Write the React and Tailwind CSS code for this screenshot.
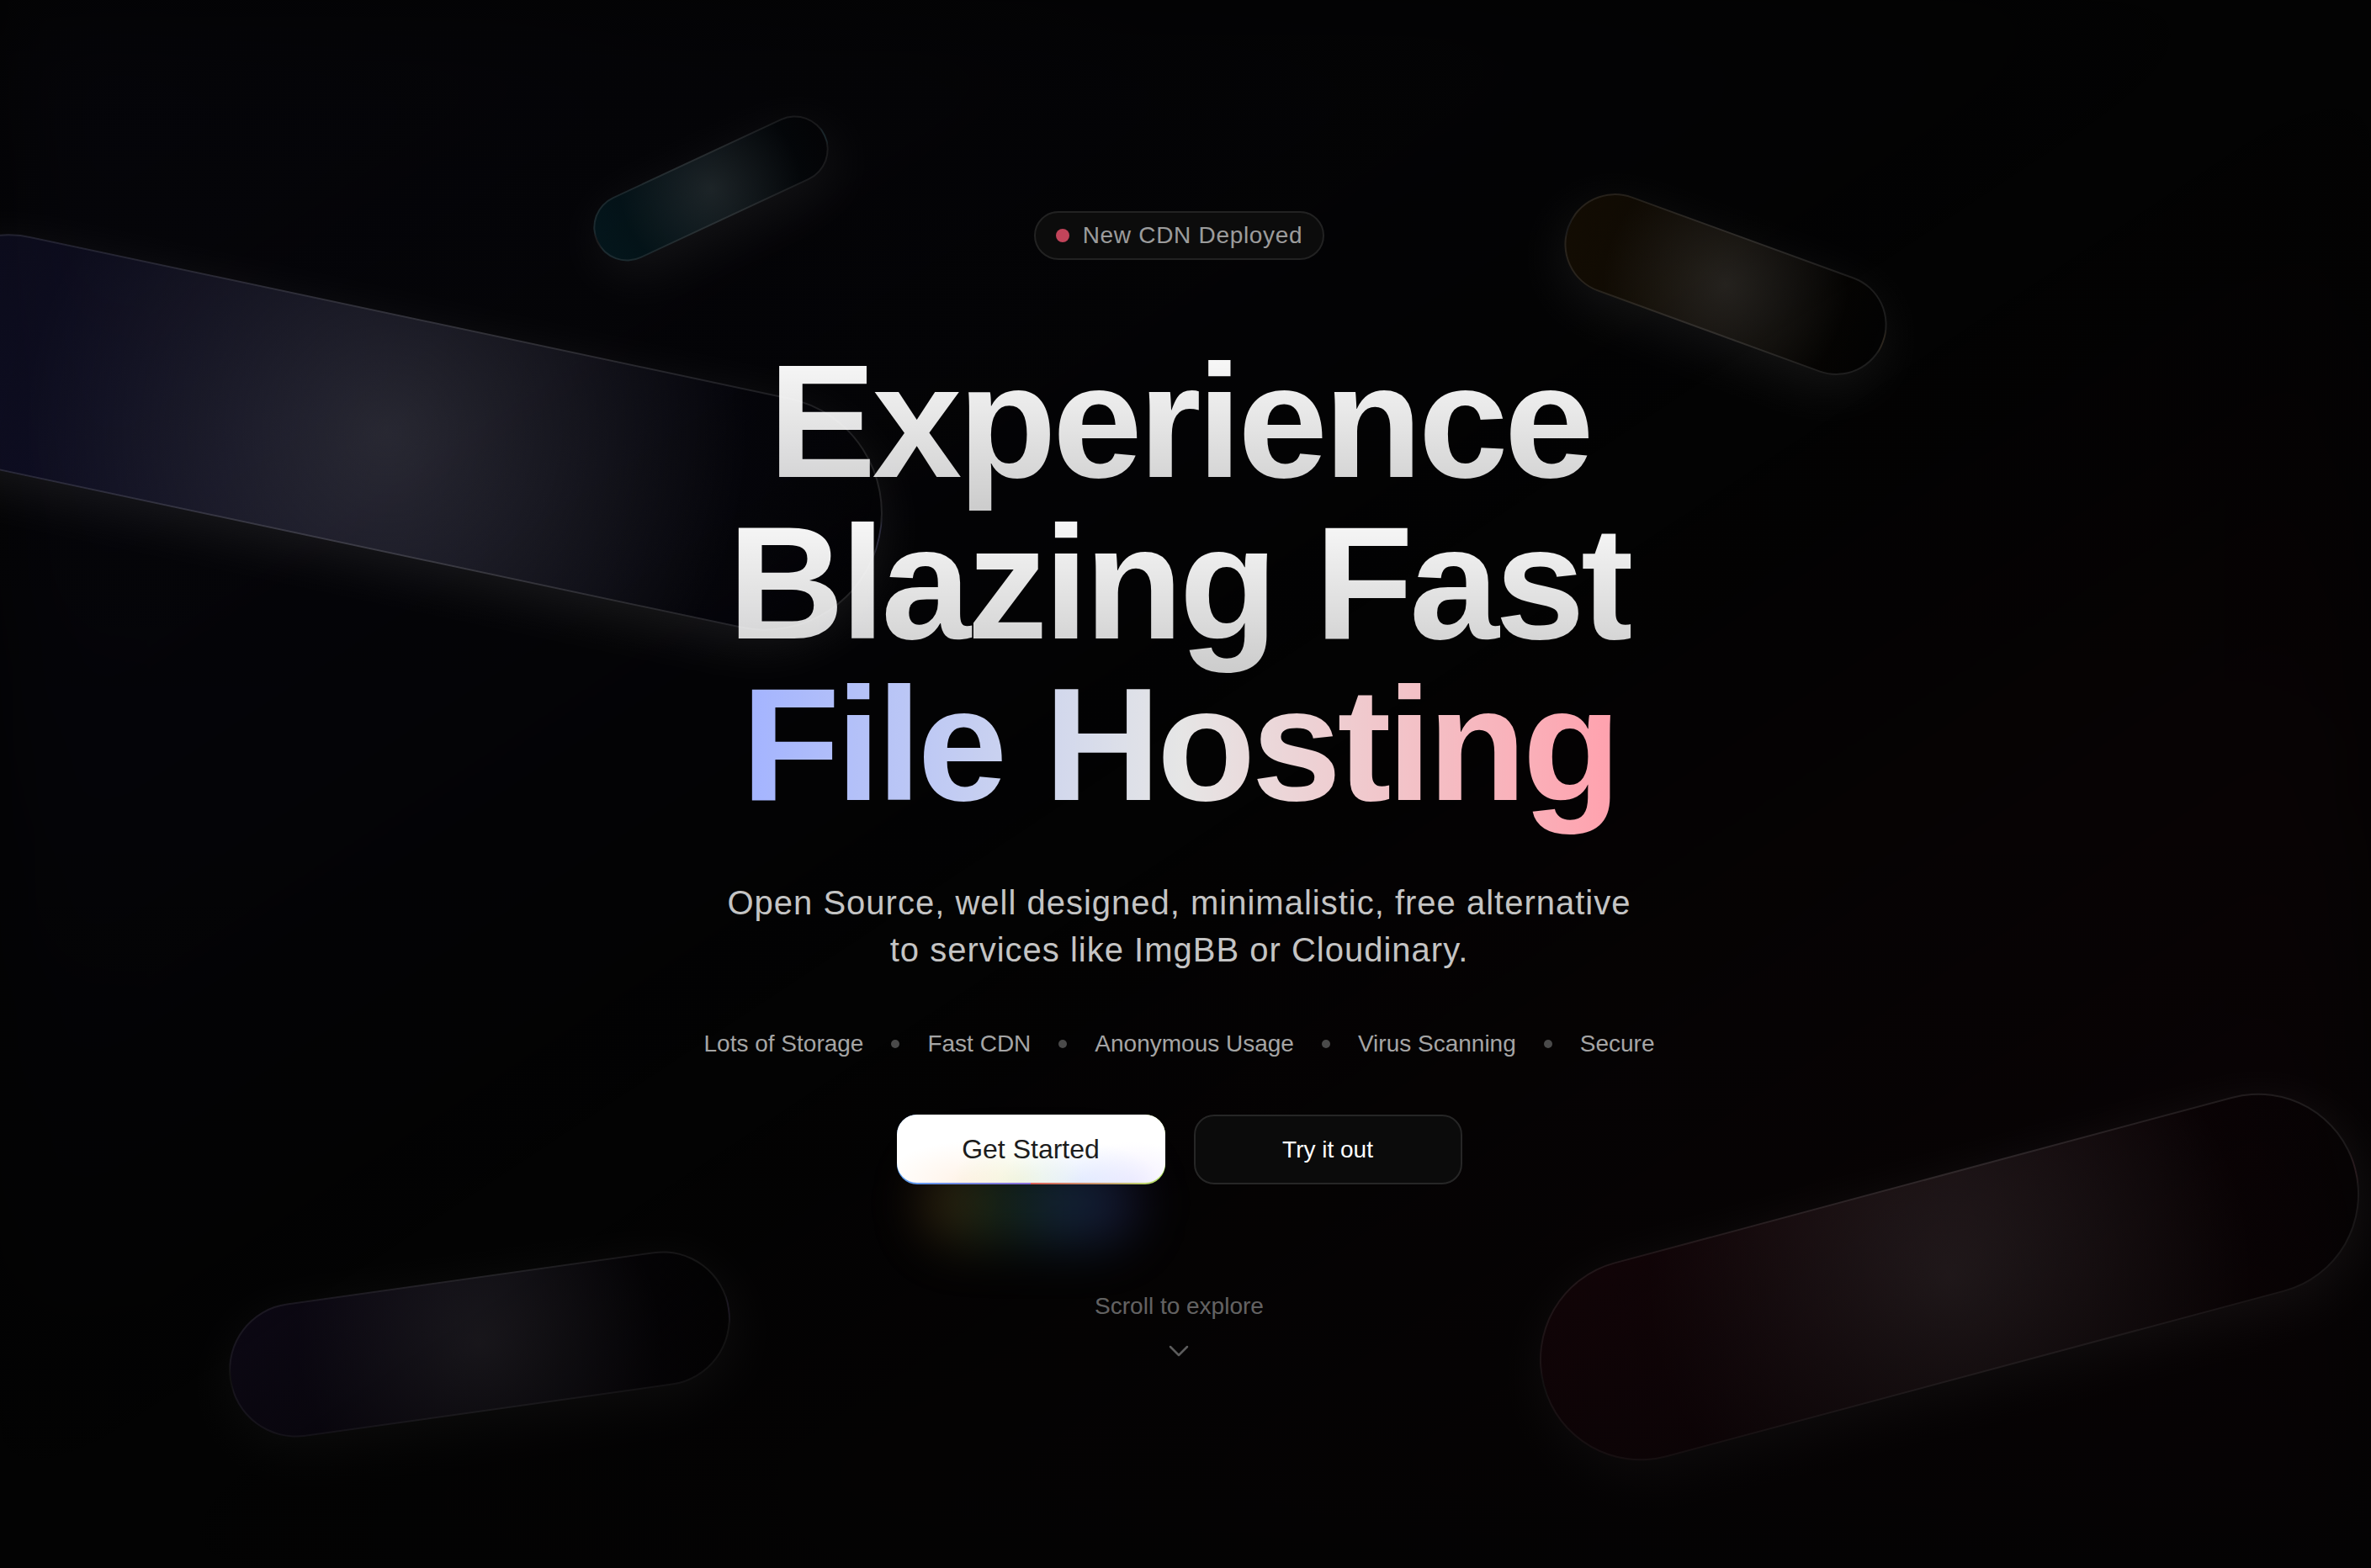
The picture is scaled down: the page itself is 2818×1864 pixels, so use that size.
import React from "react";
import { ChevronDown } from "lucide-react";

function Shape({ className, gradient }) {
    return (
        <div className={`absolute ${className}`}>
            <div className={`absolute inset-0 rounded-full bg-linear-to-r to-transparent ${gradient} border-2 border-white/15 shadow-[0_16px_64px_0_rgba(255,255,255,0.1)]`} />
            <div className="absolute inset-0 rounded-full bg-[radial-gradient(circle_at_50%_50%,rgba(255,255,255,0.16),transparent_70%)]" />
        </div>
    );
}

const features = ["Lots of Storage", "Fast CDN", "Anonymous Usage", "Virus Scanning", "Secure"];

export default function App() {
    return (
        <div className="relative w-full h-screen min-h-[1864px] overflow-hidden bg-[#030303] font-['Liberation_Sans',Arial,sans-serif]">
            {/* soft colour wash */}
            <div className="absolute inset-0 bg-linear-to-br from-indigo-500/5 via-transparent to-rose-500/5 blur-3xl" />

            {/* floating shapes */}
            <div className="absolute inset-0 overflow-hidden">
                <Shape className="left-[-141px] top-[374px] w-[1200px] h-[280px] rotate-[12deg]" gradient="from-indigo-500/15" />
                <Shape className="left-[1817px] top-[1398px] w-[1000px] h-[240px] rotate-[-15deg]" gradient="from-rose-500/10" />
                <Shape className="left-[270px] top-[1518px] w-[600px] h-[160px] rotate-[-8deg]" gradient="from-violet-500/15" />
                <Shape className="left-[1851px] top-[278px] w-[400px] h-[120px] rotate-[20deg]" gradient="from-amber-500/10" />
                <Shape className="left-[695px] top-[184px] w-[300px] h-[80px] rotate-[-25deg]" gradient="from-cyan-500/15" />
            </div>

            {/* vignette */}
            <div className="absolute inset-0 bg-linear-to-t from-[#030303]/80 via-transparent to-[#030303]/50 pointer-events-none" />

            {/* Hero content */}
            <div className="relative z-10 flex flex-col items-center pt-[251px] pr-[15px]">
                <div className="flex items-center gap-4 h-[58px] px-6 rounded-full bg-[#0c0c0c] border-2 border-[#222222]">
                    <span className="w-4 h-4 rounded-full bg-[#c2445a]" />
                    <span className="text-[28px] leading-[40px] tracking-wide text-white/60">New CDN Deployed</span>
                </div>

                <h1 className="mt-[96px] text-center text-[192px] leading-[192px] font-bold tracking-tight">
                    <span className="bg-clip-text text-transparent bg-linear-to-b from-white to-white/80">
                        Experience
                        <br />
                        Blazing Fast
                    </span>
                    <br />
                    <span className="bg-clip-text text-transparent bg-linear-to-r from-indigo-300 via-white/90 to-rose-300">
                        File Hosting
                    </span>
                </h1>

                <p className="mt-16 text-center text-[40px] leading-[56px] tracking-wide font-light text-[#c4c4c4]">
                    Open Source, well designed, minimalistic, free alternative
                    <br />
                    to services like ImgBB or Cloudinary.
                </p>

                <div className="mt-16 flex items-center gap-[33px] text-[28px] leading-[40px] text-[#a5a5a5]">
                    {features.map((f, i) => (
                        <React.Fragment key={f}>
                            {i > 0 && <span className="w-[10px] h-[10px] rounded-full bg-[#4a4a4a]" />}
                            <span>{f}</span>
                        </React.Fragment>
                    ))}
                </div>

                <div className="mt-16 flex items-start gap-[34px]">
                    <div className="relative">
                        <div className="absolute left-[30px] right-[30px] top-[55px] h-[100px] rounded-full bg-[linear-gradient(90deg,rgba(190,120,40,0.3),rgba(70,150,80,0.22)_35%,rgba(50,120,190,0.28)_65%,rgba(80,80,200,0.22))] blur-[30px]" />
                        <div className="relative rounded-[24px] pb-[2px] bg-[linear-gradient(90deg,#5ea2f2_0%,#8a6ed8_50%,#d86058_50%,#c9a070_78%,#b6ec68_100%)]">
                            <button className="relative w-[319px] h-[81px] rounded-[24px] bg-white overflow-hidden text-[32px] text-[#1c1c1c]">
                                <span className="absolute inset-0 bg-[radial-gradient(ellipse_30%_60%_at_25%_100%,rgba(255,200,150,0.22),transparent),radial-gradient(ellipse_25%_60%_at_45%_100%,rgba(215,240,170,0.3),transparent),radial-gradient(ellipse_30%_60%_at_68%_100%,rgba(180,205,255,0.35),transparent),radial-gradient(ellipse_25%_60%_at_88%_100%,rgba(215,200,255,0.3),transparent)]" />
                                <span className="relative">Get Started</span>
                            </button>
                        </div>
                    </div>
                    <button className="w-[319px] h-[83px] rounded-[24px] bg-[#0b0b0b] border-2 border-[#262626] text-[28px] text-white">
                        Try it out
                    </button>
                </div>

                <div className="mt-[125px] flex flex-col items-center text-white/40">
                    <span className="text-[28px] leading-[40px]">Scroll to explore</span>
                    <ChevronDown className="mt-[13px] w-10 h-10 text-[#5c5c5c]" strokeWidth={1.5} />
                </div>
            </div>
        </div>
    );
}
